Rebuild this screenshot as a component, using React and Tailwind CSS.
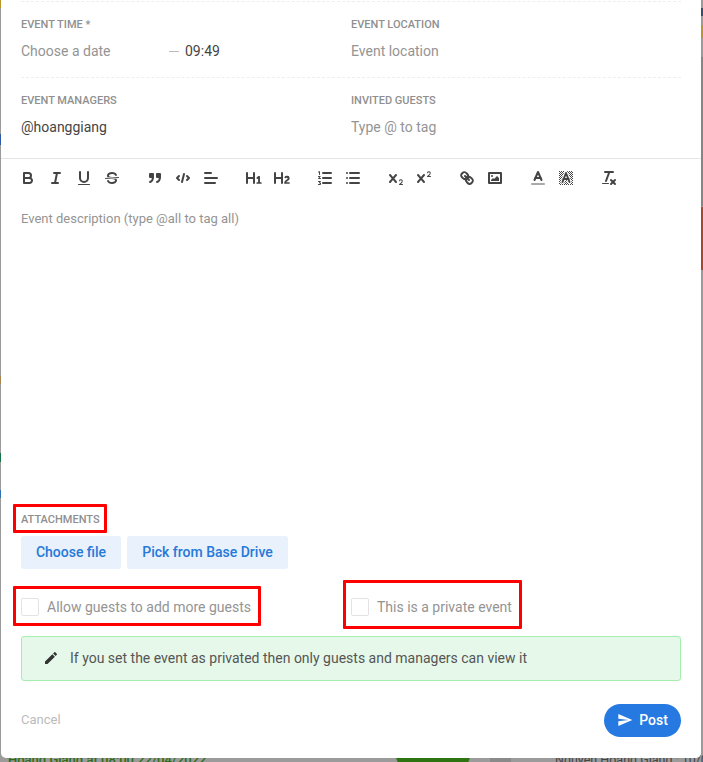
const stroke = "none";

function Ico({ children }) {
  return (
    <button type="button" className="flex h-6 w-7 items-center justify-center">
      <svg viewBox="0 0 18 18" className="h-[18px] w-[18px] fill-none stroke-[#444] stroke-2 [stroke-linecap:round] [stroke-linejoin:round]">
        {children}
      </svg>
    </button>
  );
}

const X_PATH = "M9.65,5.241a1,1,0,0,0-1.409.108L6,7.964,3.759,5.349A1,1,0,0,0,2.192,6.59178Q2.21541,6.6213,2.241,6.651L4.684,9.5,2.241,12.35A1,1,0,0,0,3.71,13.70722q0.02557-.02768.049-0.05722L6,11.036,8.241,13.65a1,1,0,1,0,1.567-1.24277Q9.78459,12.3777,9.759,12.35L7.316,9.5,9.759,6.651A1,1,0,0,0,9.65,5.241Z";

function Toolbar() {
  return (
    <div className="flex h-[38px] items-center gap-[15px] pl-[13px]">
      <div className="flex">
        <Ico>
          <path d="M5,4H9.5A2.5,2.5,0,0,1,12,6.5v0A2.5,2.5,0,0,1,9.5,9H5V4Z" />
          <path d="M5,9h5.5A2.5,2.5,0,0,1,13,11.5v0A2.5,2.5,0,0,1,10.5,14H5V9Z" />
        </Ico>
        <Ico>
          <line x1="7" x2="13" y1="4" y2="4" />
          <line x1="5" x2="11" y1="14" y2="14" />
          <line x1="8" x2="10" y1="14" y2="4" />
        </Ico>
        <Ico>
          <path d="M5,3V9a4.012,4.012,0,0,0,4,4H9a4.012,4.012,0,0,0,4-4V3" />
          <rect x="3" y="15" width="12" height="1" rx="0.5" fill="#444" stroke={stroke} />
        </Ico>
        <Ico>
          <line x1="15.5" x2="2.5" y1="8.5" y2="9.5" strokeWidth="1" />
          <path fill="#444" stroke={stroke} d="M9.007,8C6.542,7.791,6,7.519,6,6.5,6,5.792,7.283,5,9,5c1.571,0,2.765.679,2.969,1.309a1,1,0,0,0,1.9-.617C13.356,4.106,11.354,3,9,3,6.2,3,4,4.538,4,6.5a3.2,3.2,0,0,0,.5,1.843Z" />
          <path fill="#444" stroke={stroke} d="M8.984,10C11.457,10.208,12,10.479,12,11.5c0,.708-1.283,1.5-3,1.5-1.571,0-2.765-.679-2.969-1.309a1,1,0,1,0-1.9.617C4.644,13.894,6.646,15,9,15c2.8,0,5-1.538,5-3.5a3.2,3.2,0,0,0-.5-1.843Z" />
        </Ico>
      </div>
      <div className="flex">
        <Ico>
          <rect x="4" y="5" width="3" height="3" fill="#444" />
          <rect x="11" y="5" width="3" height="3" fill="#444" />
          <path d="M7,8c0,4.031-3,5-3,5" />
          <path d="M14,8c0,4.031-3,5-3,5" />
        </Ico>
        <Ico>
          <polyline points="5 7 3 9 5 11" />
          <polyline points="13 7 15 9 13 11" />
          <line x1="10" x2="8" y1="5" y2="13" />
        </Ico>
        <Ico>
          <line x1="3" x2="15" y1="9" y2="9" />
          <line x1="3" x2="13" y1="14" y2="14" />
          <line x1="3" x2="9" y1="4" y2="4" />
        </Ico>
      </div>
      <div className="flex">
        <Ico>
          <path fill="#444" stroke={stroke} d="M10,4V14a1,1,0,0,1-2,0V10H3v4a1,1,0,0,1-2,0V4A1,1,0,0,1,3,4V8H8V4a1,1,0,0,1,2,0Zm6.06787,9.209H14.98975V7.59863a.54085.54085,0,0,0-.605-.60547h-.62744a1.01119,1.01119,0,0,0-.748.29688L11.645,8.56641a.5435.5435,0,0,0-.022.8584l.28613.30762a.53861.53861,0,0,0,.84717.0332l.09912-.08789a1.2137,1.2137,0,0,0,.2417-.35254h.02246s-.01123.30859-.01123.60547V13.209H12.041a.54085.54085,0,0,0-.605.60547v.43945a.54085.54085,0,0,0,.605.60547h4.02686a.54085.54085,0,0,0,.605-.60547v-.43945A.54085.54085,0,0,0,16.06787,13.209Z" />
        </Ico>
        <Ico>
          <path fill="#444" stroke={stroke} d="M16.73975,13.81445v.43945a.54085.54085,0,0,1-.605.60547H11.855a.58392.58392,0,0,1-.64893-.60547V14.0127c0-2.90527,3.39941-3.42187,3.39941-4.55469a.77675.77675,0,0,0-.84717-.78125,1.17684,1.17684,0,0,0-.83594.38477c-.2749.26367-.561.374-.85791.13184l-.4292-.34082c-.30811-.24219-.38525-.51758-.1543-.81445a2.97155,2.97155,0,0,1,2.45361-1.17676,2.45393,2.45393,0,0,1,2.68408,2.40918c0,2.45312-3.1792,2.92676-3.27832,3.93848h2.79443A.54085.54085,0,0,1,16.73975,13.81445ZM9,3A.99974.99974,0,0,0,8,4V8H3V4A1,1,0,0,0,1,4V14a1,1,0,0,0,2,0V10H8v4a1,1,0,0,0,2,0V4A.99974.99974,0,0,0,9,3Z" />
        </Ico>
      </div>
      <div className="flex">
        <Ico>
          <line x1="7" x2="15" y1="4" y2="4" />
          <line x1="7" x2="15" y1="9" y2="9" />
          <line x1="7" x2="15" y1="14" y2="14" />
          <path strokeWidth="1" d="M2.5 3 3.5 2.5V5.5M2.5 7.5H4.2L2.5 9.5H4.5M2.5 12.5H4.5L3.3 14H4.5V15.5H2.5" />
        </Ico>
        <Ico>
          <line x1="6" x2="15" y1="4" y2="4" />
          <line x1="6" x2="15" y1="9" y2="9" />
          <line x1="6" x2="15" y1="14" y2="14" />
          <line x1="3" x2="3" y1="4" y2="4" />
          <line x1="3" x2="3" y1="9" y2="9" />
          <line x1="3" x2="3" y1="14" y2="14" />
        </Ico>
      </div>
      <div className="flex">
        <Ico>
          <path fill="#444" stroke={stroke} d={X_PATH} />
          <path fill="#444" stroke={stroke} d="M15.5,15H13.861a3.858,3.858,0,0,0,1.914-2.975,1.8,1.8,0,0,0-1.6-1.751A1.921,1.921,0,0,0,12.021,11.7a0.50013,0.50013,0,1,0,.957.291h0a0.914,0.914,0,0,1,1.053-.725,0.81,0.81,0,0,1,.744.762c0,1.076-1.16971,1.86982-1.93971,2.43082A1.45639,1.45639,0,0,0,12,15.5a0.5,0.5,0,0,0,.5.5h3A0.5,0.5,0,0,0,15.5,15Z" />
        </Ico>
        <Ico>
          <path fill="#444" stroke={stroke} d={X_PATH} />
          <path fill="#444" stroke={stroke} d="M15.5,7H13.861a4.015,4.015,0,0,0,1.914-2.975,1.8,1.8,0,0,0-1.6-1.751A1.922,1.922,0,0,0,12.021,3.7a0.5,0.5,0,1,0,.957.291,0.917,0.917,0,0,1,1.053-.725,0.81,0.81,0,0,1,.744.762c0,1.077-1.164,1.925-1.934,2.486A1.423,1.423,0,0,0,12,7.5a0.5,0.5,0,0,0,.5.5h3A0.5,0.5,0,0,0,15.5,7Z" />
        </Ico>
      </div>
      <div className="flex">
        <Ico>
          <line x1="7" x2="11" y1="7" y2="11" />
          <path d="M8.9,4.577a3.476,3.476,0,0,1,.36,4.679A3.476,3.476,0,0,1,4.577,8.9C3.185,7.5,2.035,6.4,4.217,4.217S7.5,3.185,8.9,4.577Z" />
          <path d="M13.423,9.1a3.476,3.476,0,0,0-4.679-.36,3.476,3.476,0,0,0,.36,4.679c1.392,1.392,2.5,2.542,4.679.36S14.815,10.5,13.423,9.1Z" />
        </Ico>
        <Ico>
          <rect x="3" y="4" width="12" height="10" />
          <circle cx="6" cy="7" r="1" fill="#444" stroke={stroke} />
          <polyline fill="#444" stroke={stroke} points="5 12 5 11 7 9 8 10 11 7 13 9 13 12 5 12" />
        </Ico>
      </div>
      <div className="flex">
        <Ico>
          <line x1="3" x2="15" y1="15" y2="15" stroke="#aaa" />
          <polyline points="5.5 11 9 3 12.5 11" />
          <line x1="11.63" x2="6.38" y1="9" y2="9" />
        </Ico>
        <Ico>
          <defs>
            <pattern id="dither" width="2" height="2" patternUnits="userSpaceOnUse">
              <rect width="1" height="1" fill="#444" stroke={stroke} />
              <rect x="1" y="1" width="1" height="1" fill="#444" stroke={stroke} />
            </pattern>
          </defs>
          <rect x="2" y="2" width="14" height="14" fill="url(#dither)" stroke={stroke} />
          <polyline points="5.5 13 9 4 12.5 13" stroke="#fff" strokeWidth="4" />
          <polyline points="5.5 13 9 4 12.5 13" />
          <line x1="11.63" x2="6.38" y1="10" y2="10" />
        </Ico>
      </div>
      <Ico>
        <line x1="5" x2="13" y1="3" y2="3" />
        <line x1="6" x2="9.35" y1="12" y2="3" />
        <line x1="11" x2="15" y1="11" y2="15" />
        <line x1="15" x2="11" y1="11" y2="15" />
        <rect x="2" y="14" width="7" height="1" rx="0.5" fill="#444" stroke={stroke} />
      </Ico>
    </div>
  );
}

function Label({ children }) {
  return <div className="text-[11px] leading-4 font-medium text-[#8f8f8f] uppercase">{children}</div>;
}

function Field({ label, children }) {
  return (
    <div>
      <Label>{label}</Label>
      <div className="mt-2 flex h-5 items-center text-sm leading-5 text-[#949494]">{children}</div>
    </div>
  );
}

function CheckRow({ children, className }) {
  return (
    <label className={`flex items-center gap-2 text-sm text-[#949494] ${className}`}>
      <span className="h-[18px] w-[18px] rounded-[2px] border border-[#e3e3e3] bg-white" />
      {children}
    </label>
  );
}

export default function App() {
  return (
    <div className="relative h-[762px] w-[703px] overflow-hidden bg-[#9b9b9b] [font-family:Roboto,sans-serif]">
      {/* what peeks out behind the modal */}
      <div className="absolute top-0 left-0 h-2 w-px bg-[#b8962e]" />
      <div className="absolute top-[134px] left-0 h-[11px] w-px bg-[#2f5aa8]" />
      <div className="absolute top-[376px] left-0 h-2 w-px bg-[#a88450]" />
      <div className="absolute top-[453px] left-0 h-[9px] w-px bg-[#157347]" />
      <div className="absolute top-[490px] left-0 h-2 w-px bg-[#2f6fb5]" />
      <div className="absolute top-[8px] right-0 h-2 w-[2px] bg-[#34506e]" />
      <div className="absolute top-[25px] right-0 h-[13px] w-[2px] bg-[#b8962e]" />
      <div className="absolute top-[57px] right-0 h-[149px] w-[2px] bg-[#858585]" />
      <div className="absolute top-[207px] right-0 h-[63px] w-[2px] bg-[#a8482a]" />
      <div className="absolute top-[752px] left-[8px] text-[13px] leading-4 font-medium whitespace-nowrap text-[#2f6d12]">Hoang Giang at 08:00 22/04/2022</div>
      <div className="absolute top-[740px] left-[396px] h-[30px] w-[74px] rounded-full bg-[#2e7410]" />
      <div className="absolute top-[745px] left-[490px] h-5 w-[21px] bg-[#8a8a8a]" />
      <div className="absolute top-[752px] left-[555px] text-[12.5px] leading-4 whitespace-nowrap text-[#444]">Nguyen Hoang Giang : 10/04</div>

      <div className="relative ml-px flex h-[758px] w-[700px] flex-col rounded-b-[5px] bg-white">
        <div className="px-5">
          <div className="mt-px grid h-[76px] grid-cols-[330px_1fr] border-t border-dashed border-[#eee] pt-[15px]">
            <Field label="Event time *">
              <span className="w-[148px]">Choose a date</span>
              <span className="h-px w-[10px] bg-[#bbb]" />
              <span className="ml-[6px] text-[#444]">09:49</span>
            </Field>
            <Field label="Event location">Event location</Field>
          </div>
          <div className="grid h-[81px] grid-cols-[330px_1fr] border-t border-dashed border-[#eee] pt-[15px]">
            <Field label="Event managers">
              <span className="text-[#444]">@hoanggiang</span>
            </Field>
            <Field label="Invited guests">Type @ to tag</Field>
          </div>
        </div>

        <div className="border-t border-[#e4e4e4]">
          <Toolbar />
        </div>

        <div className="flex-1 px-5 pt-[12px] text-[13px] leading-5 text-[#949494]">Event description (type @all to tag all)</div>

        <div className="px-5">
          <Label>Attachments</Label>
          <div className="mt-2 flex gap-[6px]">
            <button type="button" className="h-[33px] w-[100px] rounded-[3px] bg-[#e8f1fc] pb-px text-sm font-medium text-[#2679d8]">Choose file</button>
            <button type="button" className="h-[33px] w-[161px] rounded-[3px] bg-[#e8f1fc] pb-px text-sm font-medium text-[#2679d8]">Pick from Base Drive</button>
          </div>
          <div className="mt-[28px] flex">
            <CheckRow className="w-[330px]">Allow guests to add more guests</CheckRow>
            <CheckRow>This is a private event</CheckRow>
          </div>
          <div className="mt-[19px] flex h-[45px] w-[660px] items-center rounded-[3px] border border-[#a5eeb0] bg-[#e6f8ea] pb-px pl-[21px] text-sm text-[#555]">
            <svg viewBox="0 0 24 24" className="mr-[11px] h-4 w-4 fill-[#333]">
              <path d="M3 17.25V21h3.75L17.81 9.94l-3.75-3.75L3 17.25zM20.71 7.04c.39-.39.39-1.02 0-1.41l-2.34-2.34c-.39-.39-1.02-.39-1.41 0l-1.83 1.83 3.75 3.75 1.83-1.83z" />
            </svg>
            If you set the event as privated then only guests and managers can view it
          </div>
          <div className="mt-[23px] mb-[21px] flex w-[660px] items-center justify-between">
            <button type="button" className="pb-[2px] text-[13px] text-[#bbb]">Cancel</button>
            <button type="button" className="flex h-[33px] w-[77px] items-center justify-center gap-[6px] rounded-full bg-[#2579e0] pb-px text-sm font-medium text-white">
              <svg viewBox="0 0 24 24" className="h-4 w-4 fill-white">
                <path d="M2.01 21L23 12 2.01 3 2 10l15 2-15 2z" />
              </svg>
              Post
            </button>
          </div>
        </div>
      </div>

      {/* red annotation boxes */}
      <div className="absolute top-[504px] left-[13px] h-[29px] w-[94px] rounded-[1px] border-[3px] border-[#f00]" />
      <div className="absolute top-[586px] left-[13px] h-[40px] w-[248px] rounded-[1px] border-[3px] border-[#f00]" />
      <div className="absolute top-[580px] left-[343px] h-[49px] w-[179px] rounded-[1px] border-[3px] border-[#f00]" />
    </div>
  );
}
